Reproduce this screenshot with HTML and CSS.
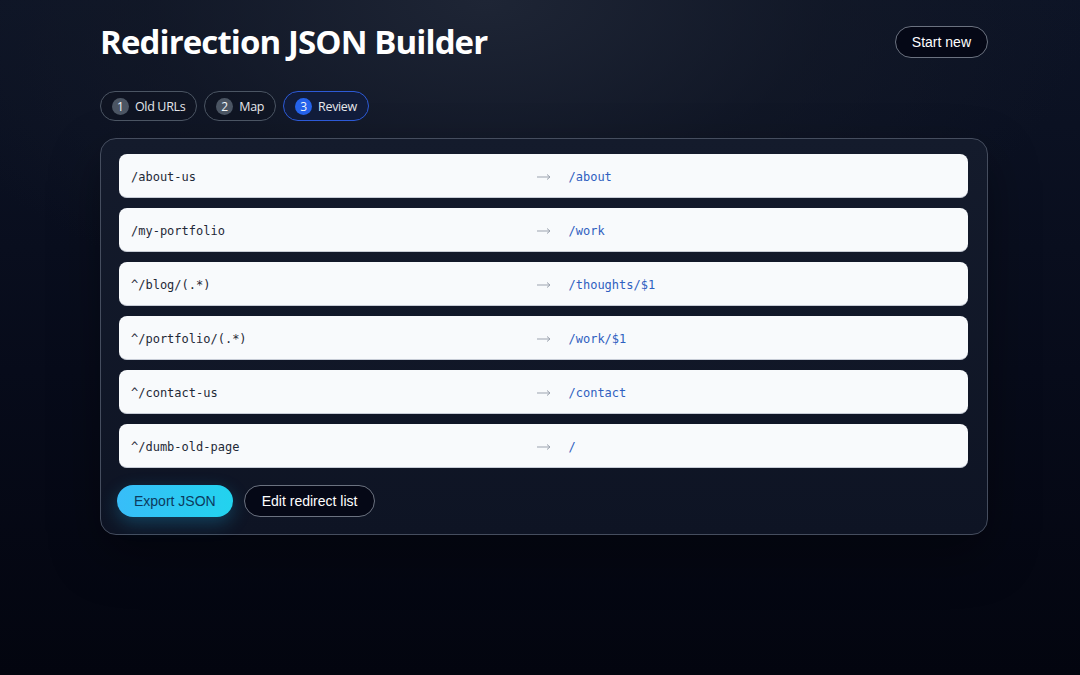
FILE: index.html
```html
<!DOCTYPE html>
<html lang="en">
<head>
    <meta charset="UTF-8">
    <meta name="viewport" content="width=device-width, initial-scale=1.0">
    <title>Redirection JSON Builder</title>
    <link rel="stylesheet" href="styles.css">
</head>
<body>
    <div class="app">
        <header class="top">
            <h1>Redirection JSON Builder</h1>
            <button class="btn btn-ghost btn-new">Start new</button>
        </header>

        <nav class="steps">
            <span class="step"><span class="step-num">1</span>Old URLs</span>
            <span class="step"><span class="step-num">2</span>Map</span>
            <span class="step active"><span class="step-num">3</span>Review</span>
        </nav>

        <main class="card">
            <ul class="rules">
                <li class="rule"><code class="from">/about-us</code><svg class="arrow" viewBox="0 0 14 8"><path d="M0 4h13M10 1.5l3 2.5-3 2.5"/></svg><code class="to">/about</code></li>
                <li class="rule"><code class="from">/my-portfolio</code><svg class="arrow" viewBox="0 0 14 8"><path d="M0 4h13M10 1.5l3 2.5-3 2.5"/></svg><code class="to">/work</code></li>
                <li class="rule"><code class="from">^/blog/(.*)</code><svg class="arrow" viewBox="0 0 14 8"><path d="M0 4h13M10 1.5l3 2.5-3 2.5"/></svg><code class="to">/thoughts/$1</code></li>
                <li class="rule"><code class="from">^/portfolio/(.*)</code><svg class="arrow" viewBox="0 0 14 8"><path d="M0 4h13M10 1.5l3 2.5-3 2.5"/></svg><code class="to">/work/$1</code></li>
                <li class="rule"><code class="from">^/contact-us</code><svg class="arrow" viewBox="0 0 14 8"><path d="M0 4h13M10 1.5l3 2.5-3 2.5"/></svg><code class="to">/contact</code></li>
                <li class="rule"><code class="from">^/dumb-old-page</code><svg class="arrow" viewBox="0 0 14 8"><path d="M0 4h13M10 1.5l3 2.5-3 2.5"/></svg><code class="to">/</code></li>
            </ul>

            <div class="actions">
                <button class="btn btn-primary">Export JSON</button>
                <button class="btn btn-ghost">Edit redirect list</button>
            </div>
        </main>
    </div>
</body>
</html>
```

FILE: styles.css
```css
:root {
    --bg-bottom: #03050f;
    --row: #f8fafc;
    --text: #f8fafc;
    --code-dark: #1f2937;
    --code-blue: #2f5fc0;
    --accent: #2563eb;
    --font-main: "Open Sans", "Noto Sans", sans-serif;
    --font-btn: "Liberation Sans", Arial, sans-serif;
    --font-code: "DejaVu Sans Mono", monospace;
}

* {
    box-sizing: border-box;
    margin: 0;
    padding: 0;
}

html, body {
    height: 100%;
}

body {
    font-family: var(--font-main);
    color: var(--text);
    background:
        radial-gradient(ellipse 70% 60% at 45% 0%, #1e2535 0%, rgba(20, 26, 40, 0.6) 45%, rgba(3, 5, 15, 0) 80%),
        linear-gradient(180deg, #0d1426 0%, #070b1a 55%, var(--bg-bottom) 100%);
    padding-top: 20px;
}

.app {
    width: 888px;
    margin-left: 100px;
}

.top {
    display: flex;
    align-items: center;
    justify-content: space-between;
    height: 44px;
}

h1 {
    font-size: 33px;
    font-weight: 700;
    letter-spacing: -0.9px;
    line-height: 44px;
    color: #fff;
}

.btn {
    font-family: var(--font-btn);
    font-size: 14px;
    height: 32px;
    padding: 0 17px;
    border-radius: 16px;
    cursor: pointer;
}

.btn-new {
    padding: 0 16px;
}

.btn-ghost {
    background: #050816;
    color: #fff;
    border: 1px solid #6b7280;
}

.btn-primary {
    background: linear-gradient(90deg, #38bdf8, #22d3ee);
    color: #0c3b5e;
    border: none;
    box-shadow: 0 6px 18px rgba(34, 180, 238, 0.28);
}

.steps {
    display: flex;
    gap: 7px;
    margin-top: 27px;
}

.step {
    display: flex;
    align-items: center;
    gap: 6px;
    height: 30px;
    padding: 0 11px 0 11px;
    border: 1px solid #4b5563;
    border-radius: 15px;
    font-size: 12.5px;
    letter-spacing: -0.35px;
    color: #e5e7eb;
    background: rgba(15, 20, 34, 0.6);
}

.step-num {
    display: inline-flex;
    align-items: center;
    justify-content: center;
    width: 17px;
    height: 17px;
    border-radius: 50%;
    background: #4b5563;
    color: #f1f5f9;
    font-size: 12px;
    letter-spacing: 0;
}

.step.active {
    border-color: #2d5ad6;
    background: #111c3a;
}

.step.active .step-num {
    background: var(--accent);
}

.card {
    margin-top: 17px;
    padding: 15px 19px 17px 18px;
    border: 1px solid #454d5e;
    border-radius: 16px;
    background: linear-gradient(180deg, #141b2c 0%, #0e1424 100%);
    box-shadow: 0 20px 50px rgba(0, 0, 0, 0.35);
}

.rules {
    list-style: none;
    display: flex;
    flex-direction: column;
    gap: 10px;
}

.rule {
    display: grid;
    grid-template-columns: 1fr auto 1fr;
    column-gap: 18px;
    align-items: center;
    height: 44px;
    padding: 2px 12px 0;
    background: var(--row);
    border-radius: 8px;
    border-bottom: 1px solid #c7ccd6;
}

.from,
.to {
    font-family: var(--font-code);
    font-size: 12px;
}

.from {
    color: var(--code-dark);
}

.to {
    color: var(--code-blue);
}

.arrow {
    width: 14px;
    height: 8px;
    fill: none;
    stroke: #9ca3af;
    stroke-width: 1;
}

.actions {
    display: flex;
    gap: 11px;
    margin-top: 17px;
    margin-left: -2px;
}
```
